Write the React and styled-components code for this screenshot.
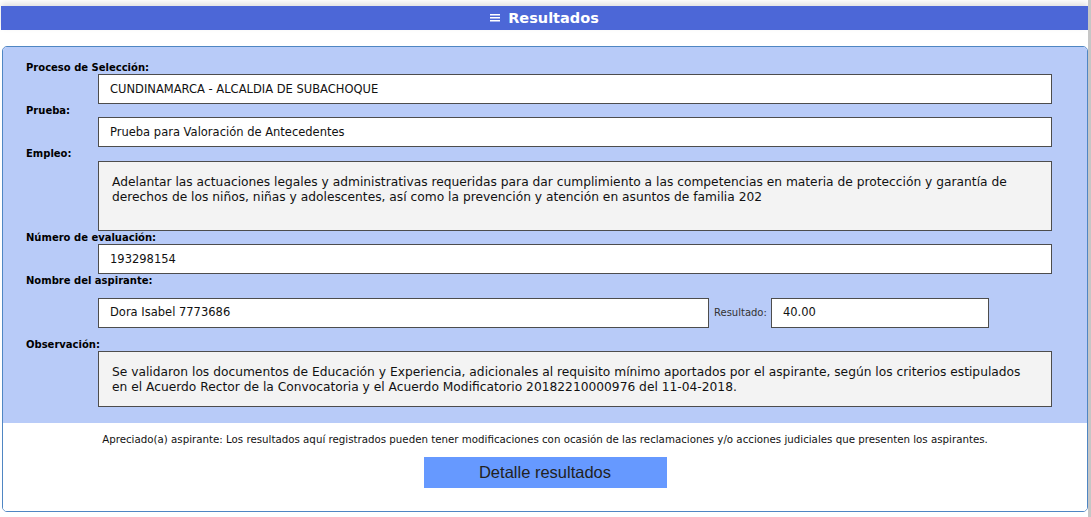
import React from "react";
import styled, { createGlobalStyle } from "styled-components";

const GlobalStyle = createGlobalStyle`
  html, body {
    margin: 0;
    padding: 0;
    background: #fff;
  }
  body {
    font-family: "DejaVu Sans", Verdana, sans-serif;
    color: #000;
  }
`;

const Page = styled.div`
  display: flex;
  width: 1091px;
  height: 517px;
  overflow: hidden;
`;

const Content = styled.div`
  flex: 1;
  display: flex;
  flex-direction: column;
  padding-top: 6px;
`;

const Gutter = styled.div`
  width: 3px;
  background: #c6c6c6;
`;

const TitleBar = styled.div`
  height: 24px;
  margin: 0 0 16px 1px;
  background: #4c67d7;
  color: #fff;
  display: flex;
  align-items: center;
  justify-content: center;
  gap: 8px;
  font-size: 14.5px;
  font-weight: bold;
  box-shadow: 0 -3px 6px rgba(0, 0, 0, 0.12);
`;

const Card = styled.div`
  margin-left: 2px;
  border: 1px solid #4f86c3;
  border-radius: 5px;
  overflow: hidden;
  height: 466px;
  box-sizing: border-box;
  display: flex;
  flex-direction: column;
`;

const Form = styled.div`
  background: #b8cbf8;
  padding: 14px 0 16px 23px;
  display: flex;
  flex-direction: column;
`;

const Label = styled.div`
  height: ${(p) => p.$h || 13}px;
  line-height: 13px;
  font-size: 10px;
  font-weight: bold;
`;

const Field = styled.div`
  margin-left: 72px;
  width: ${(p) => p.$width || 954}px;
  height: ${(p) => p.$height || 30}px;
  box-sizing: border-box;
  border: 1px solid #4d4d4d;
  background: ${(p) => (p.$multi ? "#f3f3f3" : "#fff")};
  font-size: ${(p) => (p.$multi ? 12.25 : 11.5)}px;
  color: #111;
  display: flex;
  align-items: ${(p) => (p.$multi ? "flex-start" : "center")};
  padding: ${(p) => (p.$multi ? "13px 12px 0 13px" : "0 11px")};
  line-height: 15px;
`;

const Row = styled.div`
  display: flex;
  align-items: center;
  height: 51px;
  margin-left: 72px;
  & > ${Field} {
    margin-left: 0;
  }
`;

const InlineLabel = styled.span`
  font-size: 10px;
  color: #333;
  margin: 0 4px 0 5px;
`;

const Footer = styled.div`
  flex: 1;
  background: #fff;
  display: flex;
  flex-direction: column;
  align-items: center;
  padding-top: 10px;
`;

const Note = styled.div`
  font-size: 10.25px;
  line-height: 13px;
  color: #111;
`;

const Button = styled.button`
  margin-top: 11px;
  width: 243px;
  height: 31px;
  border: none;
  background: #6699ff;
  color: #222;
  font-family: "Liberation Sans", Arial, sans-serif;
  font-size: 16.5px;
  cursor: pointer;
`;

function MenuIcon() {
  return (
    <svg width="10" height="10" viewBox="0 0 10 10">
      <rect x="0" y="1" width="10" height="1.5" fill="#fff" />
      <rect x="0" y="4" width="10" height="1.5" fill="#fff" />
      <rect x="0" y="7" width="10" height="1.5" fill="#fff" />
    </svg>
  );
}

export default function App() {
  return (
    <Page>
      <GlobalStyle />
      <Content>
        <TitleBar>
          <MenuIcon />
          <span>Resultados</span>
        </TitleBar>
        <Card>
          <Form>
            <Label>Proceso de Selección:</Label>
            <Field>CUNDINAMARCA - ALCALDIA DE SUBACHOQUE</Field>
            <Label>Prueba:</Label>
            <Field>Prueba para Valoración de Antecedentes</Field>
            <Label $h={14}>Empleo:</Label>
            <Field $multi $height={70}>
              Adelantar las actuaciones legales y administrativas requeridas para dar
              cumplimiento a las competencias en materia de protección y garantía de
              derechos de los niños, niñas y adolescentes, así como la prevención y
              atención en asuntos de familia 202
            </Field>
            <Label>Número de evaluación:</Label>
            <Field>193298154</Field>
            <Label>Nombre del aspirante:</Label>
            <Row>
              <Field $width={611}>Dora Isabel 7773686</Field>
              <InlineLabel>Resultado:</InlineLabel>
              <Field $width={218}>40.00</Field>
            </Row>
            <Label>Observación:</Label>
            <Field $multi $height={56}>
              Se validaron los documentos de Educación y Experiencia, adicionales al
              requisito mínimo aportados por el aspirante, según los criterios
              estipulados en el Acuerdo Rector de la Convocatoria y el Acuerdo
              Modificatorio 20182210000976 del 11-04-2018.
            </Field>
          </Form>
          <Footer>
            <Note>
              Apreciado(a) aspirante: Los resultados aquí registrados pueden tener
              modificaciones con ocasión de las reclamaciones y/o acciones judiciales
              que presenten los aspirantes.
            </Note>
            <Button>Detalle resultados</Button>
          </Footer>
        </Card>
      </Content>
      <Gutter />
    </Page>
  );
}
